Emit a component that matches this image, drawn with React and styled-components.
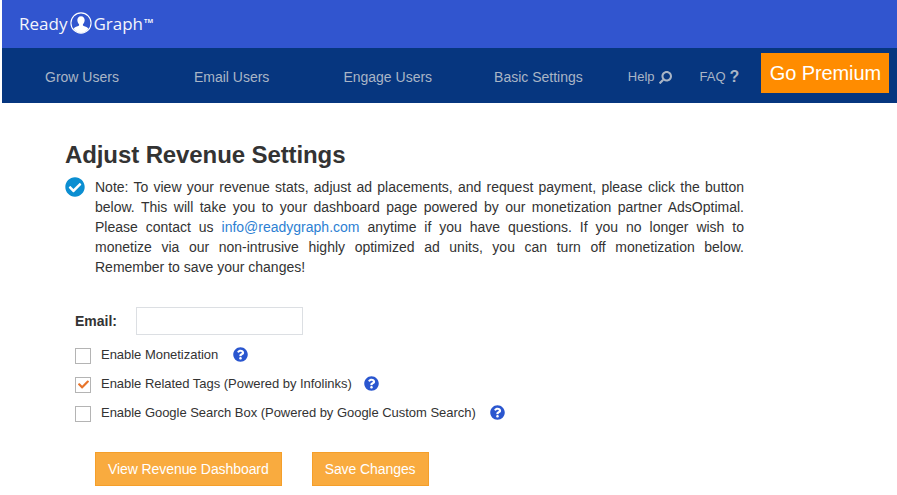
import React from 'react';
import styled, { createGlobalStyle } from 'styled-components';
import { FaSearch, FaQuestionCircle, FaCheckCircle, FaCheck } from 'react-icons/fa';

const Global = createGlobalStyle`
  html, body { margin: 0; padding: 0; background: #fff; }
  body { font-family: "Liberation Sans", Arial, sans-serif; color: #333; overflow: hidden; }
`;

const Page = styled.div`
  width: 897px;
  height: 495px;
  padding-left: 2px;
  box-sizing: border-box;
  overflow: hidden;
`;

const TopBar = styled.header`
  height: 48px;
  background: #3155cf;
  display: flex;
  align-items: center;
  padding-left: 17px;
`;

const Logo = styled.div`
  display: flex;
  align-items: center;
  color: #f4f6fc;
  font-family: "Open Sans", sans-serif;
  font-size: 17px;
  line-height: 24px;
`;

const Tm = styled.sup`
  font-size: 6px;
  line-height: 1;
  align-self: flex-start;
  margin: 6px 0 0 1px;
  font-weight: 700;
`;

const NavBar = styled.nav`
  height: 55px;
  background: #06367f;
  display: flex;
  align-items: flex-start;
`;

const NavItem = styled.a`
  color: #a9b5c6;
  font-size: ${p => (p.$small ? '13px' : '14px')};
  line-height: 16px;
  margin-top: 21px;
  margin-left: ${p => p.$gap}px;
  display: flex;
  align-items: center;
  white-space: nowrap;
`;

const FlippedSearch = styled(FaSearch)`
  width: 13px;
  height: 13px;
  margin-left: 4px;
  transform: scaleX(-1);
`;

const Mark = styled.span`
  font-size: 16px;
  font-weight: 700;
  margin-left: 4px;
`;

const Premium = styled.a`
  width: 128px;
  height: 40px;
  margin: 5px 0 0 22px;
  background: #ff8c00;
  color: #fff;
  font-size: 20px;
  letter-spacing: -0.1px;
  display: flex;
  align-items: center;
  justify-content: center;
`;

const Content = styled.main`
  padding: 37px 0 0 63px;
  width: 679px;
`;

const Title = styled.h1`
  margin: 0 0 9px;
  font-size: 24px;
  line-height: 30px;
  font-weight: 700;
  color: #333;
  letter-spacing: -0.1px;
`;

const Note = styled.div`
  display: flex;
  align-items: flex-start;
  gap: 10px;
`;

const NoteIcon = styled(FaCheckCircle)`
  flex: none;
  width: 20px;
  height: 20px;
  margin-top: -2px;
  color: #0b8ed1;
`;

const NoteText = styled.div`
  margin-top: -2px;
  width: 649px;
  font-size: 14px;
  line-height: 20px;
  color: #333;
`;

const JustifiedBlock = styled.p`
  margin: 0;
  text-align: justify;
  text-align-last: justify;
`;

const LastLine = styled.p`
  margin: 0;
`;

const Mail = styled.a`
  color: #2d7fd3;
`;

const Form = styled.div`
  margin: 30px 0 0 10px;
`;

const EmailRow = styled.div`
  display: flex;
  align-items: center;
  margin-bottom: 5px;
`;

const EmailLabel = styled.label`
  width: 61px;
  font-size: 14px;
  font-weight: 700;
`;

const EmailInput = styled.div`
  width: 167px;
  height: 28px;
  box-sizing: border-box;
  border: 1px solid #dcdfe3;
`;

const OptionRow = styled.div`
  display: flex;
  align-items: center;
  height: 29px;
`;

const Box = styled.span`
  flex: none;
  width: 16px;
  height: 16px;
  box-sizing: border-box;
  border: 1px solid #b4b4b4;
  margin-right: 10px;
  margin-top: 2px;
  display: flex;
  align-items: center;
  justify-content: center;
  color: #e8742a;
`;

const OptionText = styled.span`
  font-size: 13px;
  line-height: 16px;
  color: #333;
  letter-spacing: -0.03px;
`;

const Hint = styled(FaQuestionCircle)`
  width: 15px;
  height: 15px;
  margin-left: ${p => p.$gap}px;
  color: #2a56cf;
`;

const Actions = styled.div`
  display: flex;
  gap: 30px;
  margin: 25px 0 0 20px;
`;

const ActionButton = styled.a`
  height: 34px;
  padding: 0 12px;
  box-sizing: border-box;
  background: #f9ab3f;
  border: 1px solid #f59f2a;
  color: #fff;
  font-size: 14px;
  letter-spacing: -0.08px;
  display: flex;
  align-items: center;
`;

const Person = () => (
  <svg width="22" height="22" viewBox="0 0 24 24" style={{ margin: '-3px 1px 0 3px' }}>
    <circle cx="12" cy="12" r="11" fill="none" stroke="#fff" strokeWidth="1.200" />
    <path
      d="M12 4.500c-2.600 0-4 2-4 4.300 0 2 .9 3.600 1.900 4.500v1.500c-2 1-4.700 1.500-6 3.600A11 11 0 0 0 12 23a11 11 0 0 0 8.100-4.600c-1.300-2.100-4-2.600-6-3.600v-1.500c1-.9 1.900-2.500 1.900-4.500 0-2.300-1.400-4.300-4-4.300z"
      fill="#fff"
    />
  </svg>
);

const options = [
  { label: 'Enable Monetization', checked: false, gap: 15 },
  { label: 'Enable Related Tags (Powered by Infolinks)', checked: true, gap: 12 },
  { label: 'Enable Google Search Box (Powered by Google Custom Search)', checked: false, gap: 14 },
];

export default function App() {
  return (
    <Page>
      <Global />
      <TopBar>
        <Logo>
          Ready
          <Person />
          Graph
          <Tm>TM</Tm>
        </Logo>
      </TopBar>
      <NavBar>
        <NavItem $gap={43}>Grow Users</NavItem>
        <NavItem $gap={75}>Email Users</NavItem>
        <NavItem $gap={74}>Engage Users</NavItem>
        <NavItem $gap={62}>Basic Settings</NavItem>
        <NavItem $gap={45} $small>Help<FlippedSearch /></NavItem>
        <NavItem $gap={28} $small>FAQ<Mark>?</Mark></NavItem>
        <Premium>Go Premium</Premium>
      </NavBar>
      <Content>
        <Title>Adjust Revenue Settings</Title>
        <Note>
          <NoteIcon />
          <NoteText>
            <JustifiedBlock>
              Note: To view your revenue stats, adjust ad placements, and request payment, please click the button
              below. This will take you to your dashboard page powered by our monetization partner AdsOptimal.
              Please contact us <Mail>info@readygraph.com</Mail> anytime if you have questions. If you no longer wish to
              monetize via our non-intrusive highly optimized ad units, you can turn off monetization below.
            </JustifiedBlock>
            <LastLine>Remember to save your changes!</LastLine>
          </NoteText>
        </Note>
        <Form>
          <EmailRow>
            <EmailLabel>Email:</EmailLabel>
            <EmailInput />
          </EmailRow>
          {options.map(o => (
            <OptionRow key={o.label}>
              <Box>{o.checked && <FaCheck size={11} />}</Box>
              <OptionText>{o.label}</OptionText>
              <Hint $gap={o.gap} />
            </OptionRow>
          ))}
          <Actions>
            <ActionButton>View Revenue Dashboard</ActionButton>
            <ActionButton>Save Changes</ActionButton>
          </Actions>
        </Form>
      </Content>
    </Page>
  );
}
